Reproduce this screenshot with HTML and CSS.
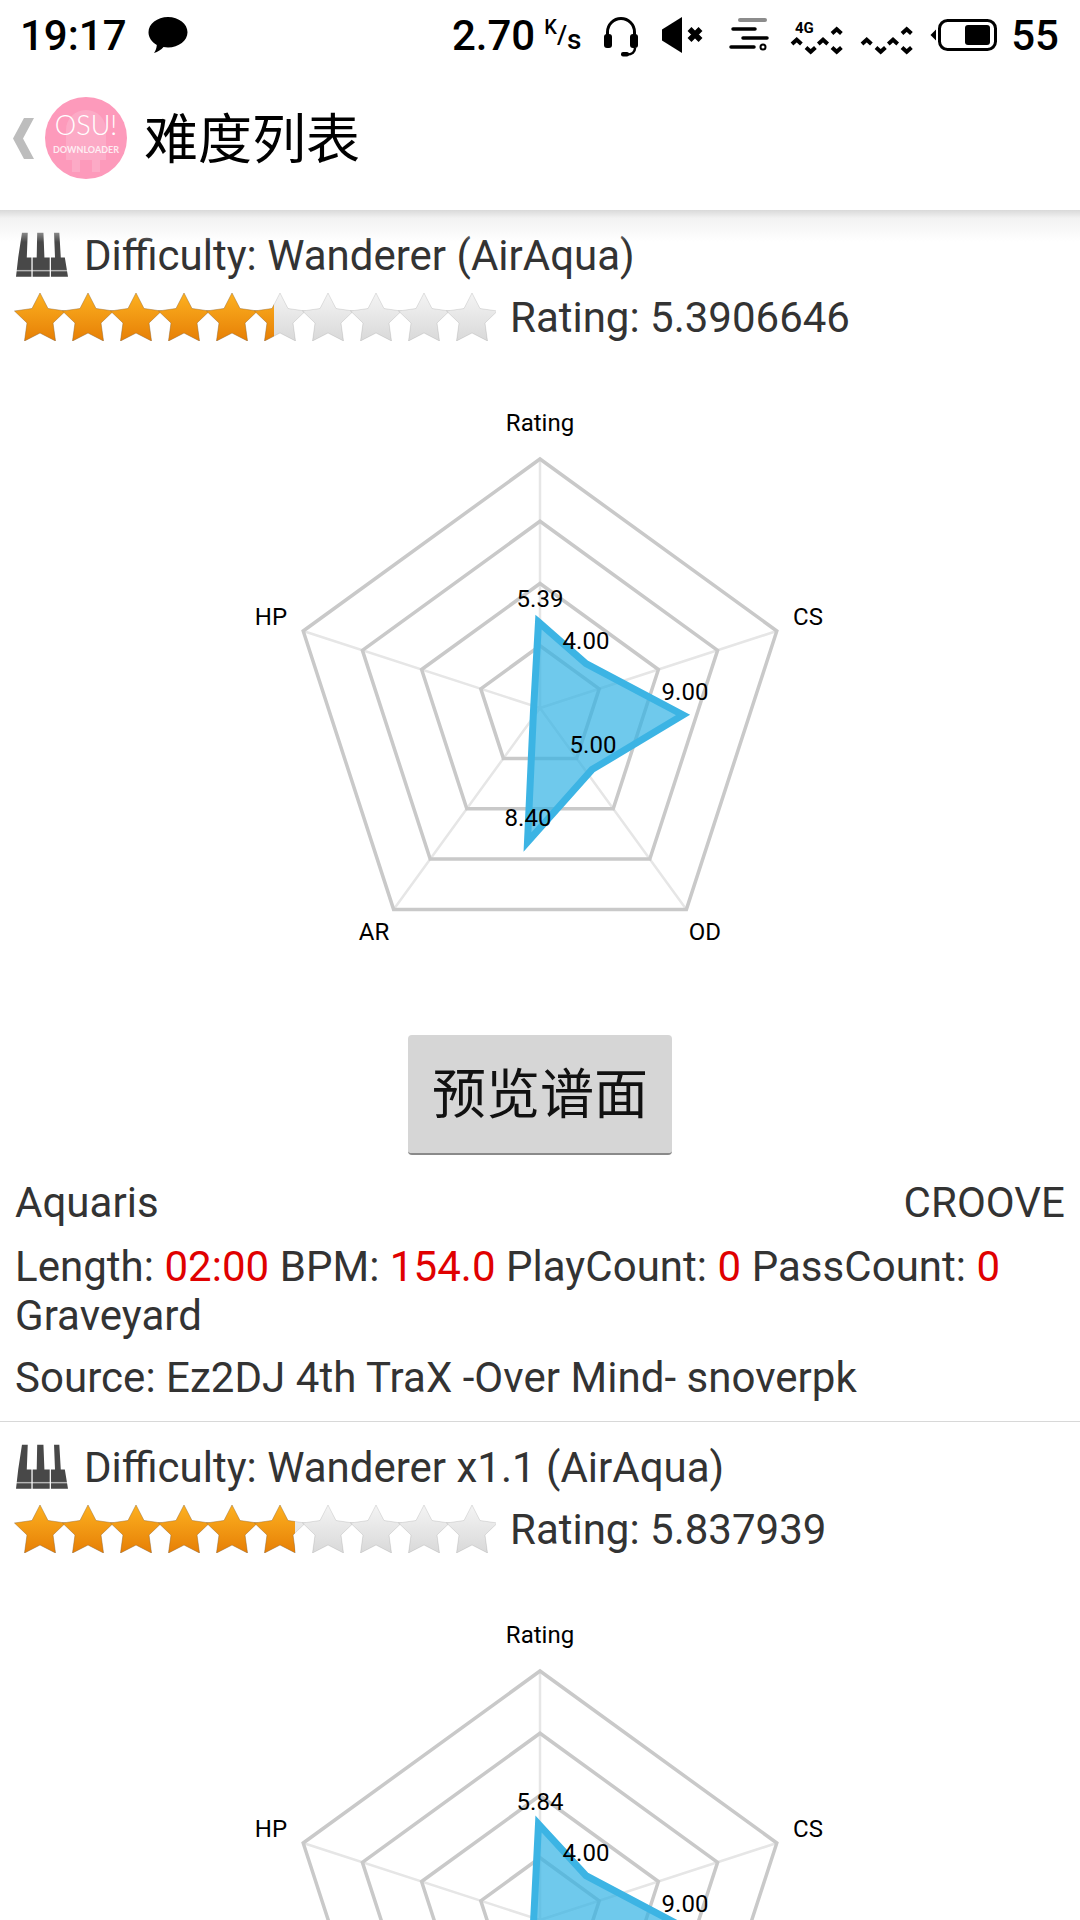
FILE: index.html
```html
<!DOCTYPE html>
<html lang="zh">
<head>
    <meta charset="UTF-8">
    <meta name="viewport" content="width=device-width, initial-scale=1.0">
    <title>难度列表</title>
    <link rel="stylesheet" href="styles.css">
</head>
<body>
    <svg class="defs" width="0" height="0">
        <defs>
            <linearGradient id="star-on" x1="0" y1="0" x2="0" y2="1">
                <stop offset="0" stop-color="#fdb120"/>
                <stop offset="1" stop-color="#e67f06"/>
            </linearGradient>
            <linearGradient id="star-off" x1="0" y1="0" x2="0" y2="1">
                <stop offset="0" stop-color="#f4f4f4"/>
                <stop offset="1" stop-color="#d9d9d9"/>
            </linearGradient>
            <polygon id="star" points="26,0 34,15.500 51.500,18 39,30 41.500,48 26,40 10.500,48 13,30 0.500,18 18,15.500"/>
            <symbol id="star-row" viewBox="0 0 482 48">
                <use href="#star" x="0"/>
                <use href="#star" x="48"/>
                <use href="#star" x="96"/>
                <use href="#star" x="144"/>
                <use href="#star" x="192"/>
                <use href="#star" x="240"/>
                <use href="#star" x="288"/>
                <use href="#star" x="336"/>
                <use href="#star" x="384"/>
                <use href="#star" x="432"/>
            </symbol>
            <symbol id="piano" viewBox="0 0 54 46">
                <path d="M6.200 0h6l-1 25.500h4.800v20h-16l2.300-20z"/>
                <path d="M22 0h6.500l1 25.500h5.500v20h-17.700v-20h4.200z"/>
                <path d="M39.500 0h5.500l1.500 25.500h4.200l3.300 20h-17.700v-20h4.200z"/>
                <rect class="piano-line" x="0" y="38.500" width="54" height="1.500"/>
            </symbol>
            <symbol id="waves" viewBox="0 0 56 40">
                <path d="M2 29l4.700-4.200 4.700 4.200M28.300 29l4.700-4.200 4.700 4.200M42 18.500l4.700-4.200 4.700 4.200M16 32.500l4.700 4.200 4.700-4.200M42 32.500l4.700 4.200 4.700-4.200"/>
            </symbol>
            <symbol id="grid" viewBox="0 0 1080 670">
                <path class="spokes" d="M540 358V109M540 358L776.800 281M540 358L686.400 559.400M540 358L393.600 559.400M540 358L303.200 281"/>
                <polygon class="ring" points="540,109 776.800,281 686.400,559.400 393.600,559.400 303.200,281"/>
                <polygon class="ring" points="540,171.250 717.600,300.300 649.800,509.100 430.200,509.100 362.400,300.300"/>
                <polygon class="ring" points="540,233.500 658.400,319.500 613.200,458.700 466.800,458.700 421.600,319.500"/>
                <polygon class="ring" points="540,295.750 599.200,338.800 576.600,408.400 503.400,408.400 480.800,338.800"/>
            </symbol>
        </defs>
    </svg>

    <div class="status-bar">
        <div class="status-left">
            <span class="clock">19:17</span>
            <svg class="icon-chat" width="40" height="36" viewBox="0 0 40 36">
                <path d="M20 0c10.800 0 19.500 6.900 19.500 15.300S30.800 30.500 20 30.500c-1.600 0-3.100-.1-4.500-.4-2.300 2.600-5.500 5-9.500 5.900 1.700-2.200 2.600-4.900 2.800-8C3.700 25 .5 20.500.5 15.300.5 6.900 9.200 0 20 0z"/>
            </svg>
        </div>
        <div class="status-right">
            <span class="speed">2.70</span>
            <span class="speed-unit"><sup>K</sup>/<sub>s</sub></span>
            <svg class="icon-headset" width="34" height="40" viewBox="0 0 34 40">
                <path class="line" d="M3.500 18v-3a13.500 13.500 0 0 1 27 0v3" stroke-width="3"/>
                <rect x="0" y="17" width="8" height="14" rx="3"/>
                <rect x="26" y="17" width="8" height="14" rx="3"/>
                <path class="line" d="M31 31c0 4-3 6.500-8 6.500" stroke-width="2.500"/>
                <rect x="17" y="35" width="8" height="4.500" rx="2"/>
            </svg>
            <svg class="icon-mute" width="41" height="36" viewBox="0 0 41 36">
                <path d="M0 12.500L20 0v36L0 23.500z"/>
                <path class="line" d="M27.500 12l11 11M38.500 12l-11 11" stroke-width="5.500"/>
            </svg>
            <svg class="icon-lines" width="40" height="34" viewBox="0 0 40 34">
                <path class="line-grey" d="M11 2h25" stroke-width="4"/>
                <path class="line" d="M4 11h22M14 20h24M2 29h23" stroke-width="3.500" stroke-linecap="round"/>
                <circle class="line" cx="34" cy="29" r="2.500" stroke-width="2"/>
            </svg>
            <svg class="icon-signal" width="56" height="40" viewBox="0 0 56 40">
                <use href="#waves"/>
                <text class="signal-text" x="5" y="18">4G</text>
            </svg>
            <svg class="icon-signal" width="56" height="40" viewBox="0 0 56 40">
                <use href="#waves"/>
            </svg>
            <svg class="icon-battery" width="67" height="32" viewBox="0 0 67 32">
                <path d="M6 10.500v11L0.500 16z"/>
                <rect class="line" x="9.500" y="1.500" width="56" height="29" rx="8" stroke-width="3"/>
                <rect x="35" y="6" width="25" height="20" rx="3"/>
            </svg>
            <span class="battery-level">55</span>
        </div>
    </div>

    <div class="action-bar">
        <svg class="back-icon" width="21" height="41" viewBox="0 0 21 41">
            <path d="M11 0h10L10 20.500 21 41H11L0 20.500z"/>
        </svg>
        <svg class="app-logo" width="84" height="84" viewBox="0 0 84 84">
            <circle class="logo-disc" cx="42" cy="42" r="41"/>
            <path class="logo-robot" d="M22 34a20 20 0 0 1 40 0v30h-6v12h-8v-12h-12v12h-8v-12h-6z"/>
            <text class="logo-big" x="42" y="39">OSU!</text>
            <text class="logo-small" x="42" y="57">DOWNLOADER</text>
        </svg>
        <h1 class="page-title">难度列表</h1>
    </div>

    <div class="item">
        <div class="title-row">
            <svg class="piano-icon" width="52" height="46"><use href="#piano"/></svg>
            <span>Difficulty: Wanderer (AirAqua)</span>
        </div>
        <div class="rating-row">
            <div class="stars">
                <svg class="stars-grey" width="482" height="48"><use href="#star-row" fill="url(#star-off)"/></svg>
                <div class="stars-on" style="width: 54%">
                    <svg width="482" height="48"><use href="#star-row" fill="url(#star-on)"/></svg>
                </div>
            </div>
            <span>Rating: 5.3906646</span>
        </div>
        <svg class="chart" width="1080" height="670" viewBox="0 0 1080 670">
            <use href="#grid"/>
            <polygon class="chart-data" points="538.500,272 586,313.600 683,365 592,419.600 527.500,492 533.500,360.700"/>
            <text x="540" y="81">Rating</text>
            <text x="808" y="275">CS</text>
            <text x="705" y="590">OD</text>
            <text x="374" y="590">AR</text>
            <text x="271" y="275">HP</text>
            <text x="540" y="257">5.39</text>
            <text x="586" y="299">4.00</text>
            <text x="685" y="350">9.00</text>
            <text x="593" y="403">5.00</text>
            <text x="528" y="476">8.40</text>
        </svg>
        <div class="button-row">
            <button class="preview-btn">预览谱面</button>
        </div>
        <div class="meta">
            <div class="meta-split"><span>Aquaris</span><span>CROOVE</span></div>
            <div class="meta-line">Length: <b>02:00</b> BPM: <b>154.0</b> PlayCount: <b>0</b> PassCount: <b>0</b><br>Graveyard</div>
            <div class="meta-source">Source: Ez2DJ 4th TraX -Over Mind- snoverpk</div>
        </div>
    </div>

    <div class="item">
        <div class="title-row">
            <svg class="piano-icon" width="52" height="46"><use href="#piano"/></svg>
            <span>Difficulty: Wanderer x1.1 (AirAqua)</span>
        </div>
        <div class="rating-row">
            <div class="stars">
                <svg class="stars-grey" width="482" height="48"><use href="#star-row" fill="url(#star-off)"/></svg>
                <div class="stars-on" style="width: 58.4%">
                    <svg width="482" height="48"><use href="#star-row" fill="url(#star-on)"/></svg>
                </div>
            </div>
            <span>Rating: 5.837939</span>
        </div>
        <svg class="chart" width="1080" height="670" viewBox="0 0 1080 670">
            <use href="#grid"/>
            <polygon class="chart-data" points="538.500,262 586,313.600 683,365 592,419.600 527.500,492 533.500,360.700"/>
            <text x="540" y="81">Rating</text>
            <text x="808" y="275">CS</text>
            <text x="271" y="275">HP</text>
            <text x="540" y="248">5.84</text>
            <text x="586" y="299">4.00</text>
            <text x="685" y="350">9.00</text>
        </svg>
    </div>
</body>
</html>
```
FILE: styles.css
```css
html, body {
    margin: 0;
    padding: 0;
}
body {
    width: 1080px;
    height: 1920px;
    overflow: hidden;
    background: #fff;
    font-family: Roboto, "Noto Sans CJK SC", sans-serif;
    color: #333;
}
svg {
    display: block;
}
.defs {
    position: absolute;
}
.line {
    fill: none;
    stroke: #000;
}
.line-grey {
    fill: none;
    stroke: #8c8c8c;
    stroke-linecap: round;
}
#waves path {
    fill: none;
    stroke: #000;
    stroke-width: 4;
}
.piano-line {
    fill: #fff;
    opacity: 0.6;
}

.status-bar {
    height: 70px;
    padding: 0 21px 0 20px;
    display: flex;
    justify-content: space-between;
    align-items: center;
    color: #000;
    font-weight: 500;
}
.status-left, .status-right {
    display: flex;
    align-items: center;
}
.clock {
    font-size: 42px;
}
.icon-chat {
    margin-left: 21px;
}
.speed, .battery-level {
    font-size: 42px;
}
.speed-unit {
    font-size: 26px;
    width: 38px;
    margin: 0 22px 0 9px;
    white-space: nowrap;
}
.speed-unit sup {
    font-size: 20px;
    vertical-align: 10px;
    line-height: 0;
}
.speed-unit sub {
    font-size: 28px;
    vertical-align: -5px;
    line-height: 0;
}
.icon-headset {
    margin-top: 3px;
}
.icon-mute {
    margin-left: 24px;
}
.icon-lines {
    margin-left: 26px;
}
.icon-signal {
    margin-left: 21px;
}
.icon-signal + .icon-signal {
    margin-left: 14px;
}
.signal-text {
    font-size: 15px;
    font-weight: 700;
}
.icon-battery {
    margin-left: 14px;
}
.battery-level {
    margin-left: 14px;
}

.action-bar {
    height: 140px;
    padding: 0 0 4px 13px;
    box-sizing: border-box;
    display: flex;
    align-items: center;
    position: relative;
    background: #fff;
}
.action-bar::after {
    content: "";
    position: absolute;
    left: 0;
    right: 0;
    top: 100%;
    height: 32px;
    background: linear-gradient(#d9d9d9, #f2f2f2 25%, rgba(255, 255, 255, 0));
}
.back-icon {
    fill: #bdbdbd;
}
.app-logo {
    margin-left: 10px;
}
.logo-disc {
    fill: #fd9abb;
}
.logo-robot {
    fill: #fcaac6;
}
.logo-big, .logo-small {
    fill: #fff;
    text-anchor: middle;
    font-family: Lato, sans-serif;
}
.logo-big {
    font-size: 27px;
    font-weight: 300;
}
.logo-small {
    font-size: 9px;
    font-weight: 700;
    opacity: 0.8;
}
.page-title {
    margin: 0 0 6px 16px;
    font-size: 54px;
    font-weight: 400;
    color: #000;
}

.item {
    padding-top: 22px;
    height: 1212px;
    box-sizing: border-box;
    border-bottom: 1px solid #d8d8d8;
    font-size: 42px;
}
.title-row {
    height: 46px;
    padding-left: 16px;
    display: flex;
    align-items: center;
    gap: 16px;
}
.piano-icon {
    fill: #484848;
}
.rating-row {
    height: 48px;
    margin-top: 15px;
    padding-left: 14px;
    display: flex;
    align-items: center;
    gap: 14px;
}
.stars {
    width: 482px;
    height: 48px;
    position: relative;
    stroke: rgba(140, 90, 30, 0.3);
    stroke-width: 1;
}
.stars-grey {
    stroke: rgba(0, 0, 0, 0.1);
}
.stars-on {
    position: absolute;
    left: 0;
    top: 0;
    height: 48px;
    overflow: hidden;
}
.chart {
    margin-top: 9px;
}
.chart text {
    font-size: 24px;
    fill: #000;
    text-anchor: middle;
}
.ring {
    fill: none;
    stroke: #c9c9c9;
    stroke-width: 3.500;
}
.spokes {
    fill: none;
    stroke: #e6e6e6;
    stroke-width: 2.500;
}
.chart-data {
    fill: rgba(50, 178, 228, 0.7);
    stroke: #3cb4e4;
    stroke-width: 7;
}
.button-row {
    margin-top: 15px;
    display: flex;
    justify-content: center;
}
.preview-btn {
    width: 264px;
    height: 120px;
    padding: 0 0 8px;
    background: #d6d6d6;
    border: none;
    border-bottom: 2px solid #8a8a8a;
    border-radius: 4px;
    font-family: "Noto Sans CJK SC", sans-serif;
    font-size: 54px;
    color: #111;
}
.meta {
    margin-top: 23px;
    padding: 0 15px;
    line-height: 49px;
    letter-spacing: 0.04px;
}
.meta-split {
    display: flex;
    justify-content: space-between;
}
.meta-line {
    margin-top: 15px;
}
.meta-line b {
    font-weight: 400;
    color: #e00000;
}
.meta-source {
    margin-top: 13px;
}
```
